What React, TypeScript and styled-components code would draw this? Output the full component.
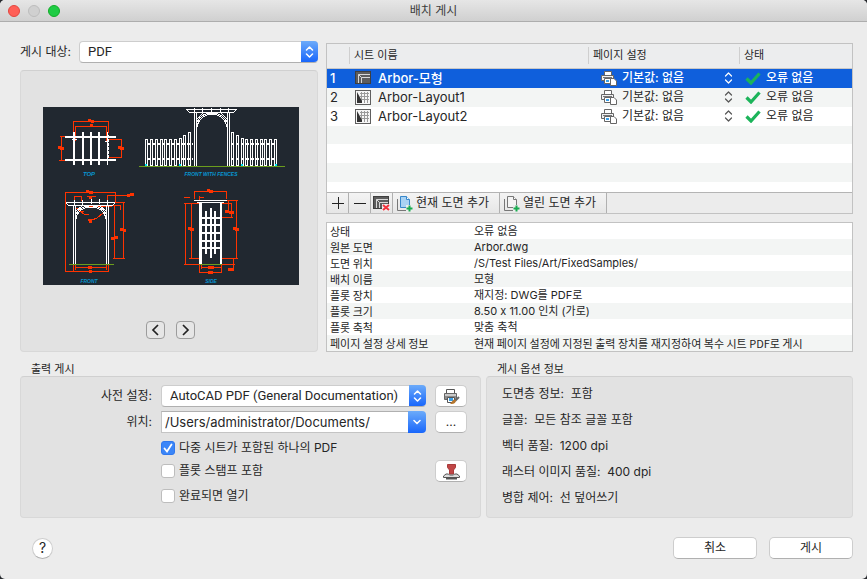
import React from "react";
import styled, { createGlobalStyle, css } from "styled-components";

const GlobalStyle = createGlobalStyle`
  *, *::before, *::after { box-sizing: border-box; }
  html, body, #root { height: 100%; }
  body {
    margin: 0;
    background: #26292e;
    color: #262626;
    font-family: Inter, "Noto Sans CJK KR", sans-serif;
    font-feature-settings: "calt" 0;
    font-size: 12px;
    line-height: 16px;
  }
  button, input, select { font: inherit; color: inherit; margin: 0; }
`;

/* ---------- window frame ---------- */

const Window = styled.main`
  min-height: 100%;
  display: flex;
  flex-direction: column;
  background: #ececec;
  border-radius: 5px;
  overflow: hidden;
`;

const TitleBar = styled.header`
  display: grid;
  grid-template-columns: 1fr auto 1fr;
  align-items: center;
  height: 22px;
  padding: 0 8px;
  border-bottom: 1px solid #adadad;
  background: linear-gradient(#e6e6e6, #d0d0d0);
`;

const Title = styled.h1`
  margin: 0;
  font-size: 12px;
  font-weight: 400;
  color: #3c3c3c;
`;

const Lights = styled.div`
  display: flex;
  gap: 8px;
`;

const Light = styled.button<{ $fill: string; $edge: string }>`
  width: 12px;
  height: 12px;
  padding: 0;
  border: 1px solid ${(p) => p.$edge};
  border-radius: 50%;
  background: ${(p) => p.$fill};
`;

const Content = styled.div`
  flex: 1;
  display: flex;
  flex-direction: column;
  padding: 19px 14px 20px 20px;
`;

const Upper = styled.div`
  display: grid;
  grid-template-columns: 298px minmax(0, 1fr);
  gap: 8px;
`;

const Lower = styled.div`
  flex: 1;
  display: grid;
  grid-template-columns: minmax(0, 461fr) minmax(0, 367fr);
  gap: 5px;
`;

const Column = styled.div<{ $top?: number }>`
  display: flex;
  flex-direction: column;
  gap: 8px;
  padding-top: ${(p) => p.$top ?? 0}px;
`;

const panel = css`
  border: 1px solid #d8d8d8;
  border-top-color: #d0d0d0;
  border-radius: 4px;
  background: #e2e2e2;
`;

/* ---------- controls ---------- */

const TargetRow = styled.div`
  display: grid;
  grid-template-columns: 1fr 239px;
  align-items: center;
  height: 21px;
`;

const control = css`
  border: 1px solid #cdcdcd;
  border-bottom-color: #b0b0b0;
  background: #fff;
`;

const PopupBox = styled.span`
  display: flex;
  height: 22px;
  position: relative;
`;

const PopupSelect = styled.select`
  ${control}
  appearance: none;
  width: 100%;
  height: 22px;
  padding: 0 18px 0 8px;
  border-radius: 4px;
  font-family: Roboto, "Noto Sans CJK KR", sans-serif;
  font-size: 13px;
`;

const Cap = styled.span`
  position: absolute;
  top: 0;
  right: 0;
  display: flex;
  align-items: center;
  justify-content: center;
  width: 17px;
  height: 21px;
  border-radius: 0 4px 4px 0;
  background: linear-gradient(#6cabfa, #1866fb);
  pointer-events: none;
`;

const ComboBox = styled.div`
  display: flex;
  height: 22px;
`;

const ComboInput = styled.input`
  flex: 1;
  min-width: 0;
  padding: 0 3px;
  border: 1px solid #c4c4c4;
  border-top-color: #b0b0b0;
  border-right: 0;
  background: #fff;
  font-size: 13px;
`;

const ComboArrow = styled.button`
  display: flex;
  align-items: center;
  justify-content: center;
  width: 18px;
  height: 22px;
  padding: 0;
  border: 0;
  border-radius: 0 4px 4px 0;
  background: linear-gradient(#6cabfa, #1866fb);
`;

const PushButton = styled.button<{ $width: number }>`
  ${control}
  display: flex;
  align-items: center;
  justify-content: center;
  width: ${(p) => p.$width}px;
  height: 22px;
  padding: 0;
  border-radius: 5px;
`;

const HelpButton = styled.button`
  ${control}
  width: 21px;
  height: 21px;
  padding: 0;
  border-radius: 50%;
  font-size: 14px;
  line-height: 18px;
`;

/* ---------- preview ---------- */

const Preview = styled.section`
  ${panel}
  flex: 1;
  display: flex;
  flex-direction: column;
  align-items: center;
  padding: 36px 0 12px 4px;
`;

const Pager = styled.div`
  display: flex;
  gap: 11px;
  margin-top: auto;
  padding-right: 2px;
`;

const PageButton = styled.button`
  display: flex;
  align-items: center;
  justify-content: center;
  width: 19px;
  height: 18px;
  padding: 0;
  border: 1px solid #9c9c9c;
  border-radius: 4px;
  background: #e6e6e6;
`;

/* ---------- sheet list ---------- */

const SheetBox = styled.section`
  border: 1px solid #c2c2c2;
`;

const SheetArea = styled.div`
  min-height: 148px;
  background: repeating-linear-gradient(#f3f5f4 0 19px, #fff 19px 38px) 0 5px;
`;

const SheetTable = styled.table`
  width: 100%;
  table-layout: fixed;
  border-collapse: collapse;
`;

const HeadCell = styled.th`
  height: 24px;
  padding: 0;
  background: #ecedee;
  border-bottom: 1px solid #c8c8c8;
  font-size: 11px;
  font-weight: 400;
  text-align: left;
  line-height: 17px;

  span {
    display: block;
    padding-left: 4px;
    border-left: 1px solid #cfcfcf;
  }
`;

const SheetRow = styled.tr<{ $selected: boolean; $odd: boolean }>`
  height: 19px;
  background: ${(p) => (p.$selected ? "#0f5fdc" : p.$odd ? "#fff" : "#f3f5f4")};
  color: ${(p) => (p.$selected ? "#fff" : "#262626")};
  font-weight: ${(p) => (p.$selected ? 500 : 400)};
`;

const Cell = styled.td<{ $left: number }>`
  height: 19px;
  padding: 0 0 0 ${(p) => p.$left}px;
  line-height: 18px;
`;

const CellLine = styled.div<{ $gap: number }>`
  display: flex;
  align-items: center;
  gap: ${(p) => p.$gap}px;
  height: 19px;
`;

const Name = styled.span`
  font-size: 13px;
`;

const SetupSelect = styled.select`
  appearance: none;
  width: 97px;
  height: 18px;
  padding: 0;
  border: 0;
  background: transparent;
  font-weight: inherit;
`;

const Toolbar = styled.div`
  display: flex;
  height: 21px;
  border-top: 1px solid #b4b4b4;
  background: #ececec;
`;

const ToolButton = styled.button<{ $width: number; $labelled?: boolean }>`
  display: flex;
  align-items: center;
  justify-content: ${(p) => (p.$labelled ? "flex-start" : "center")};
  gap: 3px;
  width: ${(p) => p.$width}px;
  padding: 0 0 0 ${(p) => (p.$labelled ? 3 : 0)}px;
  border: 0;
  border-right: 1px solid #b0b0b0;
  background: linear-gradient(#f4f4f4, #e6e6e6);
`;

/* ---------- sheet details ---------- */

const Details = styled.table`
  width: 100%;
  border: 1px solid #c2c2c2;
  border-collapse: separate;
  border-spacing: 0;
  table-layout: fixed;
  font-size: 11px;
  background: #fff;

  th, td {
    height: 16px;
    padding: 0 0 0 3px;
    font-weight: 400;
    text-align: left;
    line-height: 16px;
    white-space: nowrap;
  }
  th { font-family: "Noto Sans CJK KR", sans-serif; }
  td { padding-left: 4px; }
  tr:nth-child(even) { background: #f3f5f4; }
`;

const DetailValue = styled.td<{ $sentence: boolean }>`
  font-family: ${(p) => (p.$sentence ? '"Noto Sans CJK KR", sans-serif' : "inherit")};
`;

/* ---------- lower groups ---------- */

const Group = styled.section`
  display: flex;
  flex-direction: column;
`;

const GroupTitle = styled.h2`
  margin: 0;
  padding: 9px 0 0 11px;
  height: 24px;
  font-size: 11px;
  line-height: 16px;
  font-weight: 400;
`;

const GroupBody = styled.div`
  ${panel}
  flex: 1;
`;

const Form = styled(GroupBody)`
  display: flex;
  flex-direction: column;
  padding: 6px 13px 0 0;
`;

const FormRow = styled.div<{ $height: number }>`
  display: grid;
  grid-template-columns: 131px minmax(0, 1fr) 32px;
  column-gap: 9px;
  align-items: center;
  align-content: center;
  height: ${(p) => p.$height}px;
`;

const FieldLabel = styled.label`
  justify-self: end;
`;

const CheckLabel = styled.label`
  grid-column: 2;
  justify-self: start;
  display: flex;
  align-items: center;
  gap: 4px;
`;

const CheckBox = styled.input`
  appearance: none;
  width: 14px;
  height: 14px;
  border: 1px solid #bdbdbd;
  border-radius: 3px;
  background: #fff;

  &:checked {
    border-color: #2f78ee;
    background: #3b86f8;
  }
`;

const CheckHolder = styled.span`
  position: relative;
  display: flex;

  svg {
    position: absolute;
    top: 0;
    left: 0;
    pointer-events: none;
  }
  input:not(:checked) + svg { display: none; }
`;

const OptionList = styled.ul`
  display: flex;
  flex-direction: column;
  gap: 10px;
  margin: 0;
  padding: 9px 15px 0;
  list-style: none;

  li { height: 16px; line-height: 16px; white-space: pre; }
`;

const Footer = styled.footer`
  display: flex;
  align-items: center;
  gap: 12px;
  padding: 19px 0 0 12px;
`;

const Spacer = styled.span`
  flex: 1;
`;

/* ---------- icons ---------- */

const UpDown = ({ color, weight = 1.5 }: { color: string; weight?: number }) => (
  <svg width="9" height="12" viewBox="0 0 9 12" fill="none" stroke={color} strokeWidth={weight} strokeLinecap="round" strokeLinejoin="round">
    <path d="M1.5 4 4.5 1l3 3M1.5 8l3 3 3-3" />
  </svg>
);

const ModelIcon = ({ removed = false }: { removed?: boolean }) => (
  <svg width="17" height="15" viewBox="0 0 17 15">
    <rect x="0.5" y="0.5" width="15" height="12" fill="#5d5d5d" stroke="#3f3f3f" />
    <path d="M3.500 12V3.500H15M6.500 12V6.500H15M3.500 3.500l3 3" stroke="#d8d8d8" fill="none" />
    {removed && (
      <>
        <path d="M9 8h8v7H9z" fill="#eee" />
        <path d="m10 9 6 5M16 9l-6 5" stroke="#f3333d" strokeWidth="2" />
      </>
    )}
  </svg>
);

const LayoutIcon = () => (
  <svg width="17" height="15" viewBox="0 0 17 15">
    <rect x="0.5" y="0.5" width="15" height="14" fill="#f6f6f6" stroke="#5f5f5f" />
    <path d="M6.500 2v9M9.500 2v11M12.500 2v11M5 3.500h9M5 6.500h9M7 9.500h7" stroke="#9a9a9a" fill="none" />
    <path d="M2 2l5 9v2H2z" fill="#333" />
  </svg>
);

const PrinterPageIcon = () => (
  <svg width="16" height="16" viewBox="0 0 16 16">
    <path d="M3.500 1.500h7v4h-7z" fill="#fff" stroke="#666" />
    <path d="M.5 5.500h12v5H.5z" fill="#f0f0f0" stroke="#666" />
    <path d="M2 7h9v1H2z" fill="#777" />
    <path d="M3.500 8.500h7v5h-7z" fill="#fff" stroke="#666" />
    <path d="M5 10h3v2H5z" fill="#3aa0e8" />
    <path d="M9.500 8.500h3.500l2.500 2.500v4.500h-6z" fill="#fff" stroke="#666" />
  </svg>
);

const PrinterBrushIcon = () => (
  <svg width="17" height="17" viewBox="0 0 17 17">
    <path d="M3.500 1.500h8v4h-8z" fill="#fff" stroke="#555" />
    <path d="M1.500 5.500h12v6h-12z" fill="#8c8c8c" stroke="#666" />
    <path d="M2 6h11v2H2z" fill="#c9c9c9" />
    <path d="M4.500 9.500h7v5h-7z" fill="#fff" stroke="#555" />
    <path d="M6 10h4v3H6z" fill="#3aa0e8" />
    <path d="m16 9-4 4" stroke="#666" strokeWidth="2" />
    <path d="M13 12c0 3-2 4.500-6 4 1.500-.8 2-3.500 4-4.500z" fill="#b5762f" />
  </svg>
);

const StampIcon = () => (
  <svg width="17" height="17" viewBox="0 0 17 17">
    <path d="M4.500 1.500h8v3l-2 2.500v4h-4V7l-2-2.500z" fill="#c04646" stroke="#a83a3a" />
    <path d="M.5 14.500v-1.500l2.500-2h2.500l1 1h4l1-1H14l2.500 2v1.500z" fill="#ddd" stroke="#555" />
    <path d="M3 15.500h11" stroke="#555" strokeWidth="2" />
  </svg>
);

const AddSheetIcon = ({ filled }: { filled: boolean }) => (
  <svg width="17" height="17" viewBox="0 0 17 17" fill="none">
    <path d="M1.500 4v11.500H10" stroke="#777" />
    <path d="M4.500 1.500h6l3 3v8h-9z" fill={filled ? "#a9d2f3" : "#f4f4f4"} stroke={filled ? "#3787cb" : "#777"} />
    <path d="M10.500 1.500v3h3" fill="#fff" stroke={filled ? "#3787cb" : "#777"} />
    <path d="M10 10h7v7h-7z" fill="#ececec" />
    <path d="M13.500 10.500v6M10.500 13.500h6" stroke="#18ab50" strokeWidth="2" />
  </svg>
);

const OkIcon = () => (
  <svg width="16" height="13" viewBox="0 0 16 13">
    <path d="M1.500 6.500 6 11 14.500 1.500" fill="none" stroke="#1cb45a" strokeWidth="3.200" />
  </svg>
);

const Chevron = ({ d }: { d: string }) => (
  <svg width="11" height="14" viewBox="0 0 11 14" fill="none" stroke="#222" strokeWidth="1.700">
    <path d={d} />
  </svg>
);

/* ---------- arbor drawing ---------- */

const Picket = ({ x, y }: { x: number; y: number }) => <path d={`M${x}.5 58.500V${y}.500h2V58.500z`} />;

const leftPickets = [102, 107, 112, 117, 121, 126, 131].map((x) => [x, 32]).concat([[136, 31], [140, 28], [145, 25]]);
const rightPickets = [[188, 25], [193, 28], [198, 31]].concat([202, 207, 212, 217, 221, 226, 231].map((x) => [x, 32]));

const ArborDrawing = () => (
  <svg width="256" height="178" viewBox="0 0 256 178" role="img" aria-label="Arbor" fill="none" shapeRendering="crispEdges">
    <rect width="256" height="178" fill="#212830" />
    <g stroke="#ff3300">
      <path d="M30.500 26V14.500H65.500V26M32.500 34V19.500H63.500V34M17 29.500h7M18.500 29v25M16 53.500h8M66 32.500h13M78.500 32v19M66 50.500h13" />
      <path d="M22.500 165V85.500H72.500V95M31.500 94v-4.500h7V94M44 89.500h9M64.500 94v-5.500H90M71.500 99v53M80.500 95v57M70 151.500h12M72 95.500h10M68 98.500h9v4" />
      <path d="M30.500 157v8M65.500 157v8M32.500 160.500h31M22 164.500h43M63.500 157v6M32.500 157v6" />
      <path d="M33 101l8 6h5M60 106l-6 5-5 2M37 100v4h4M45 99.500h24" />
      <path d="M151.500 92V84.500H183.500V92M141 90.500h6M156.500 89v5M156 90.500h5M142.500 96v61M148.500 96v56M141 96.500h15M146 151.500h10M141 157.500h16" />
      <path d="M193.500 93v59M184 93.500h11M177 151.500h18M185.500 93v11M188.500 96v15M178 96.500h11M178 110.500h12M190.500 152v10M178 157.500h14" />
      <path d="M156.500 157v9M178.500 157v9M158.500 157v5M158 160.500h20M156 165.500h23" />
      <path d="M45 13.500h3M48 14.500h3M47 18.500h3M15 40.500h3M17 41.500h4M75 40.500h3M77 41.500h4M43 84.500h3M46 85.500h4M46 90.500h3M84 88.500h3M87 87.500h4M68 131.500h4M71 130.500h4M77 122.500h3M80 123.500h3M45 160.500h4M46 164.500h3M164 83.500h3M166 84.500h4M145 121.500h3M147 122.500h4M190 121.500h3M192 122.500h4M182 104.500h4M186 105.500h5M165 160.500h6M165 165.500h5M185 162.500h6" strokeWidth="3" />
      <path d="M45 112.500h4M46 114.500h3" strokeWidth="2" />
    </g>
    <g stroke="#fff" strokeWidth="2">
      <path d="M22 30h51M22 53h51" />
      <path d="M31 25v33M40 25v33M48 25v33M56 25v33" />
      <path d="M65 28v25" strokeDasharray="3 1" />
    </g>
    <g stroke="#fff">
      <path d="M64.500 25v33M29 32.500h5M62 34.500h3" />
      {leftPickets.map(([x, y]) => <Picket key={x} x={x} y={y} />)}
      {rightPickets.map(([x, y]) => <Picket key={x} x={x} y={y} />)}
      <path d="M102 37h48M102 52h48M186 37h48M186 52h48" strokeWidth="2" strokeDasharray="3 2" strokeDashoffset="-2" />
      <path d="M151.500 6v53M153.500 6v53M184.500 6v53M186.500 6v53" />
      <path d="M143 2.500h51M146 5.500h45M143 2l4 4M194 2l-4 4M151.500 1v4M159.500 1v4M168.500 1v4M177.500 1v4M185.500 1v4" />
      <path d="M154 20c3-17 27-17 30 0M154 15c6-12 24-12 30 0M154 12l6-6M184 12l-6-6" />
      <path d="M23 95.500h49M25 98.500h45M23 96l3 3M72 96l-3 3M31.500 93v5M39.500 93v5M48 92v5M56 92v5M64.500 93v5" />
      <path d="M30.500 99v58M32.500 99v58M63.500 99v58M65.500 99v58" />
      <path d="M33 112c2-16 28-16 30 0M33 107c6-11 24-11 30 0M33 104l6-5M63 104l-6-5" />
      <path d="M151 93.500h33M154 95.500h27" />
    </g>
    <g fill="#fff">
      <path d="M156 95h3v62h-3zM177 95h2v62h-2z" />
      <path d="M162 104h2v43h-2zM167 101h2v50h-2zM171 104h2v43h-2z" />
      <path d="M158 110h20v2h-20zM158 117h20v2h-20zM158 125h20v2h-20zM158 133h20v2h-20zM158 140h20v2h-20z" />
    </g>
    <path d="M96 59.500h146M26 157.500h45M156 157.500h23" stroke="#6b9d1d" />
    <path d="M102 57h2v2h-2zM136 57h2v2h-2zM198 57h2v2h-2zM232 57h2v2h-2z" fill="#00e5f2" />
    <g fill="#0797d2" fontFamily="Liberation Sans, sans-serif" fontSize="6" fontStyle="italic" fontWeight="700" textAnchor="middle">
      <text x="46" y="69">TOP</text>
      <text x="168" y="69" fontSize="5">FRONT WITH FENCES</text>
      <text x="46" y="176" fontSize="5">FRONT</text>
      <text x="168" y="176" fontSize="5">SIDE</text>
    </g>
  </svg>
);

/* ---------- data ---------- */

const sheets = [
  { name: "Arbor-모형", model: true },
  { name: "Arbor-Layout1", model: false },
  { name: "Arbor-Layout2", model: false },
];

const details = [
  { key: "상태", value: "오류 없음" },
  { key: "원본 도면", value: "Arbor.dwg" },
  { key: "도면 위치", value: "/S/Test Files/Art/FixedSamples/" },
  { key: "배치 이름", value: "모형" },
  { key: "플롯 장치", value: "재지정: DWG를 PDF로" },
  { key: "플롯 크기", value: "8.50 x 11.00 인치 (가로)" },
  { key: "플롯 축척", value: "맞춤 축척" },
  {
    key: "페이지 설정 상세 정보",
    value: "현재 페이지 설정에 지정된 출력 장치를 재지정하여 복수 시트 PDF로 게시",
    sentence: true,
  },
];

const options = [
  "도면층 정보:  포함",
  "글꼴:  모든 참조 글꼴 포함",
  "벡터 품질:  1200 dpi",
  "래스터 이미지 품질:  400 dpi",
  "병합 제어:  선 덮어쓰기",
];

const Check = ({ label, checked = false }: { label: string; checked?: boolean }) => (
  <CheckLabel>
    <CheckHolder>
      <CheckBox type="checkbox" defaultChecked={checked} />
      <svg width="14" height="14" viewBox="0 0 14 14">
        <path d="M3.500 7.500 6 10.500l4.500-7" fill="none" stroke="#fff" strokeWidth="1.800" strokeLinecap="round" />
      </svg>
    </CheckHolder>
    {label}
  </CheckLabel>
);

export default function App() {
  return (
    <>
      <GlobalStyle />
      <Window>
        <TitleBar>
          <Lights>
            <Light aria-label="닫기" $fill="#ff5f57" $edge="#e2463f" />
            <Light aria-label="최소화" $fill="#d0d0d0" $edge="#bcbcbc" />
            <Light aria-label="확대" $fill="#1fcc45" $edge="#12ac28" />
          </Lights>
          <Title>배치 게시</Title>
        </TitleBar>
        <Content>
          <Upper>
            <Column>
              <TargetRow>
                <label htmlFor="target">게시 대상:</label>
                <PopupBox>
                  <PopupSelect id="target"><option>PDF</option></PopupSelect>
                  <Cap><UpDown color="#fff" /></Cap>
                </PopupBox>
              </TargetRow>
              <Preview>
                <ArborDrawing />
                <Pager>
                  <PageButton aria-label="이전"><Chevron d="M8 2 3 7l5 5" /></PageButton>
                  <PageButton aria-label="다음"><Chevron d="m3 2 5 5-5 5" /></PageButton>
                </Pager>
              </Preview>
            </Column>
            <Column $top={2}>
              <SheetBox>
                <SheetArea>
                  <SheetTable>
                    <colgroup>
                      <col width="22" />
                      <col />
                      <col width="151" />
                      <col width="113" />
                    </colgroup>
                    <thead>
                      <tr>
                        <HeadCell aria-label="번호" />
                        <HeadCell><span>시트 이름</span></HeadCell>
                        <HeadCell><span>페이지 설정</span></HeadCell>
                        <HeadCell><span>상태</span></HeadCell>
                      </tr>
                    </thead>
                    <tbody>
                      {sheets.map((sheet, i) => (
                        <SheetRow key={sheet.name} $selected={i === 0} $odd={i % 2 === 0}>
                          <Cell $left={3}><Name>{i + 1}</Name></Cell>
                          <Cell $left={6}>
                            <CellLine $gap={6}>
                              {sheet.model ? <ModelIcon /> : <LayoutIcon />}
                              <Name>{sheet.name}</Name>
                            </CellLine>
                          </Cell>
                          <Cell $left={13}>
                            <CellLine $gap={5}>
                              <PrinterPageIcon />
                              <SetupSelect aria-label="페이지 설정"><option>기본값: 없음</option></SetupSelect>
                              <UpDown color={i === 0 ? "#fff" : "#555"} weight={1.2} />
                            </CellLine>
                          </Cell>
                          <Cell $left={6}>
                            <CellLine $gap={5}>
                              <OkIcon />
                              <span>오류 없음</span>
                            </CellLine>
                          </Cell>
                        </SheetRow>
                      ))}
                    </tbody>
                  </SheetTable>
                </SheetArea>
                <Toolbar>
                  <ToolButton $width={22} aria-label="추가">
                    <svg width="12" height="12" viewBox="0 0 12 12"><path d="M6.500 0v12M0 6.500h12" stroke="#222" /></svg>
                  </ToolButton>
                  <ToolButton $width={22} aria-label="제거">
                    <svg width="12" height="12" viewBox="0 0 12 12"><path d="M0 6.500h12" stroke="#222" /></svg>
                  </ToolButton>
                  <ToolButton $width={22} aria-label="모형 제거"><ModelIcon removed /></ToolButton>
                  <ToolButton $width={107} $labelled><AddSheetIcon filled />현재 도면 추가</ToolButton>
                  <ToolButton $width={107} $labelled><AddSheetIcon filled={false} />열린 도면 추가</ToolButton>
                </Toolbar>
              </SheetBox>
              <Details>
                <colgroup>
                  <col width="143" />
                  <col />
                </colgroup>
                <tbody>
                  {details.map((row) => (
                    <tr key={row.key}>
                      <th scope="row">{row.key}</th>
                      <DetailValue $sentence={row.sentence ?? false}>{row.value}</DetailValue>
                    </tr>
                  ))}
                </tbody>
              </Details>
            </Column>
          </Upper>
          <Lower>
            <Group>
              <GroupTitle>출력 게시</GroupTitle>
              <Form>
                <FormRow $height={26}>
                  <FieldLabel htmlFor="preset">사전 설정:</FieldLabel>
                  <PopupBox>
                    <PopupSelect id="preset"><option>AutoCAD PDF (General Documentation)</option></PopupSelect>
                    <Cap><UpDown color="#fff" /></Cap>
                  </PopupBox>
                  <PushButton $width={32} aria-label="플롯 설정"><PrinterBrushIcon /></PushButton>
                </FormRow>
                <FormRow $height={26}>
                  <FieldLabel htmlFor="location">위치:</FieldLabel>
                  <ComboBox>
                    <ComboInput id="location" defaultValue="/Users/administrator/Documents/" />
                    <ComboArrow aria-label="최근 위치">
                      <svg width="8" height="6" viewBox="0 0 8 6"><path d="m1 1.500 3 3 3-3" fill="none" stroke="#fff" strokeWidth="1.500" strokeLinecap="round" /></svg>
                    </ComboArrow>
                  </ComboBox>
                  <PushButton $width={32}>...</PushButton>
                </FormRow>
                <FormRow $height={26}>
                  <Check label="다중 시트가 포함된 하나의 PDF" checked />
                </FormRow>
                <FormRow $height={20}>
                  <Check label="플롯 스탬프 포함" />
                  <PushButton $width={32} aria-label="플롯 스탬프 설정"><StampIcon /></PushButton>
                </FormRow>
                <FormRow $height={30}>
                  <Check label="완료되면 열기" />
                </FormRow>
              </Form>
            </Group>
            <Group>
              <GroupTitle>게시 옵션 정보</GroupTitle>
              <GroupBody>
                <OptionList>
                  {options.map((text) => <li key={text}>{text}</li>)}
                </OptionList>
              </GroupBody>
            </Group>
          </Lower>
          <Footer>
            <HelpButton aria-label="도움말">?</HelpButton>
            <Spacer />
            <PushButton $width={84}>취소</PushButton>
            <PushButton $width={84}>게시</PushButton>
          </Footer>
        </Content>
      </Window>
    </>
  );
}
